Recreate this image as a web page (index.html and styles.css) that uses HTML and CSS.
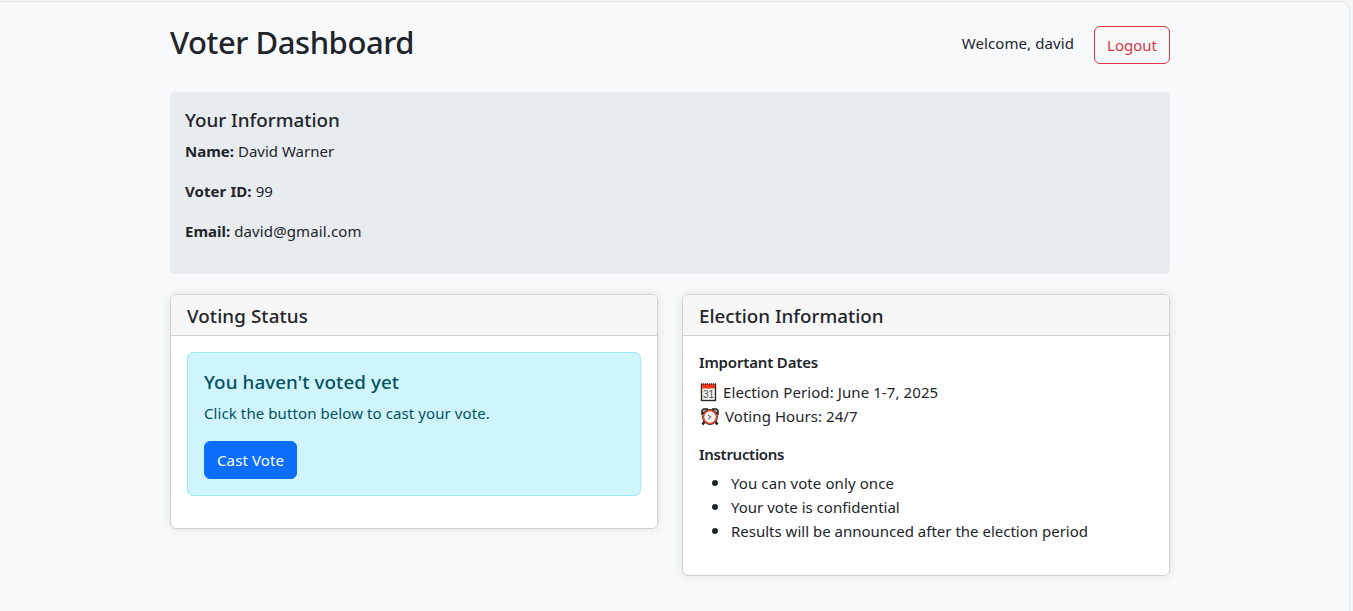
FILE: index.html
```html
<!DOCTYPE html>
<html lang="en">
<head>
<meta charset="utf-8">
<title>Voter Dashboard</title>
<link rel="stylesheet" href="styles.css">
</head>
<body>
<main class="page">
<div class="container">
  <header class="topbar">
    <h2 class="title">Voter Dashboard</h2>
    <div class="account">
      <span class="welcome">Welcome, david</span>
      <button class="btn btn-logout">Logout</button>
    </div>
  </header>
  <section class="voter-info">
    <h5 class="heading">Your Information</h5>
    <p class="field"><strong>Name:</strong><span>David Warner</span></p>
    <p class="field"><strong class="label-id">Voter ID:</strong><span>99</span></p>
    <p class="field"><strong>Email:</strong><span class="email">david@gmail.com</span></p>
  </section>
  <div class="row">
    <section class="card">
      <div class="card-header"><h5 class="heading status-title">Voting Status</h5></div>
      <div class="card-body">
        <div class="alert">
          <h5 class="heading alert-title">You haven't voted yet</h5>
          <p class="text">Click the button below to cast your vote.</p>
          <button class="btn btn-vote">Cast Vote</button>
        </div>
      </div>
    </section>
    <section class="card">
      <div class="card-header"><h5 class="heading">Election Information</h5></div>
      <div class="card-body election-body">
        <h6 class="subheading">Important Dates</h6>
        <div class="dates">
          <div class="date-line">
            <svg class="icon" width="18" height="20" viewBox="0 0 18 20">
              <rect x="2.500" y="2.500" width="14" height="16" fill="#f0f0f0" stroke="#222" stroke-width="1.300"/>
              <path d="M3.200 2h12.600v4.500H3.200z" fill="#f03a17"/>
              <path d="M2 2h15" stroke="#501a12" stroke-width="1.500" stroke-dasharray="1 1"/>
              <text x="9.500" y="15.500" class="calendar-day" text-anchor="middle">31</text>
            </svg><span class="period">Election Period: June 1-7, 2025</span></div>
          <div class="date-line">
            <svg class="icon" width="20" height="20" viewBox="-1 -1 20 20">
              <path d="M5 14l-2.500 3.500M15 14l2.500 3.500" stroke="#222" stroke-width="2.500"/>
              <path d="M2 7V3.500L3.500 2H7.300v2zM18 7V3.500L16.500 2h-3.800v2z" fill="#bbb" stroke="#222" stroke-width="1.500"/>
              <circle cx="10" cy="10" r="7.900" fill="#222"/>
              <circle cx="10" cy="10" r="6.500" fill="#f5f5f5" stroke="#e8492c" stroke-width="1.600"/>
              <path d="M8 8l2.800 2-2.800 2.200" fill="none" stroke="#777" stroke-width="1.100"/>
            </svg><span class="hours">Voting Hours: 24/7</span></div>
        </div>
        <h6 class="subheading instructions">Instructions</h6>
        <ul class="list">
          <li class="rule-once">You can vote only once</li>
          <li>Your vote is confidential</li>
          <li>Results will be announced after the election period</li>
        </ul>
      </div>
    </section>
  </div>
</div>
</main>
</body>
</html>
```
FILE: styles.css
```css
*{box-sizing:border-box}
body{margin:0;height:611px;overflow:hidden;background:#f5f5f5;color:#212529;font:15px/24px "Noto Sans","Open Sans",sans-serif}
h2,h5,h6,p,ul{margin:0}
.page{width:1360px;height:640px;margin-top:1px;margin-left:-10px;padding-left:9px;border:1px solid #e3e5e8;border-radius:10px;background:#f8f9fb}
.container{width:1000px;margin-left:170px;padding-top:20px}
.topbar{display:flex;justify-content:space-between;height:70px}
.title{margin-top:1px;font-size:31px;line-height:38.400px;font-weight:500;letter-spacing:-.450px}
.account{display:flex;align-items:flex-start;gap:20px}
.btn{height:38px;padding:0 12px;border:1px solid;border-radius:6px;font:15px/24px "Noto Sans","Open Sans",sans-serif;white-space:nowrap}
.btn-logout{margin-top:4px;color:#dc3545;background:transparent;width:76px}
.welcome{margin-top:9px;letter-spacing:.090px}
.voter-info{height:182px;padding:15px;background:#e9ecef;border-radius:5px}
.heading{position:relative;top:1px;font-size:18.800px;line-height:24px;font-weight:500;margin-bottom:8px;white-space:nowrap}
.status-title{letter-spacing:.100px}
.alert-title{letter-spacing:.090px}
.field{margin-bottom:16px;display:flex;gap:4px}
.label-id{letter-spacing:.080px}
.email{letter-spacing:.120px}
.row{display:grid;grid-template-columns:488px 488px;gap:24px;align-items:start;margin-top:20px}
.card{border:1px solid #d0d2d4;border-radius:6px;background:#fff;box-shadow:0 0 10px rgba(0,0,0,.1)}
.card-header{padding:8px 16px;height:41px;border-bottom:1px solid #d0d2d4;background:#f7f7f7;border-radius:5px 5px 0 0}
.card-body{padding:16px}
.election-body{padding-top:17px}
.alert{padding:16px;height:144px;margin-bottom:16px;border:1px solid #9eeaf9;border-radius:6px;background:#cff4fc;color:#055160}
.text{margin-bottom:16px;letter-spacing:.090px}
.btn-vote{color:#fff;background:#0d6efd;border-color:#0d6efd;width:93px;letter-spacing:.120px}
.subheading{font-size:15px;line-height:19.200px;font-weight:600;margin-bottom:8px;letter-spacing:-.170px}
.instructions{letter-spacing:-.300px;padding-top:1px;margin-bottom:7px}
.dates{margin-bottom:16px}
.date-line{display:flex;align-items:center;height:24px}
.icon{margin-right:6px}
.period{letter-spacing:.090px}
.hours{letter-spacing:.060px}
.calendar-day{font:10px "Liberation Sans",sans-serif;fill:#555}
.list{padding-left:13px;margin-bottom:16px;list-style:none}
.list li{display:flex;align-items:center;gap:13px;height:24px}
.list li::before{content:"";width:6px;height:6px;border-radius:50%;background:#212529}
.rule-once{letter-spacing:.090px}
```
